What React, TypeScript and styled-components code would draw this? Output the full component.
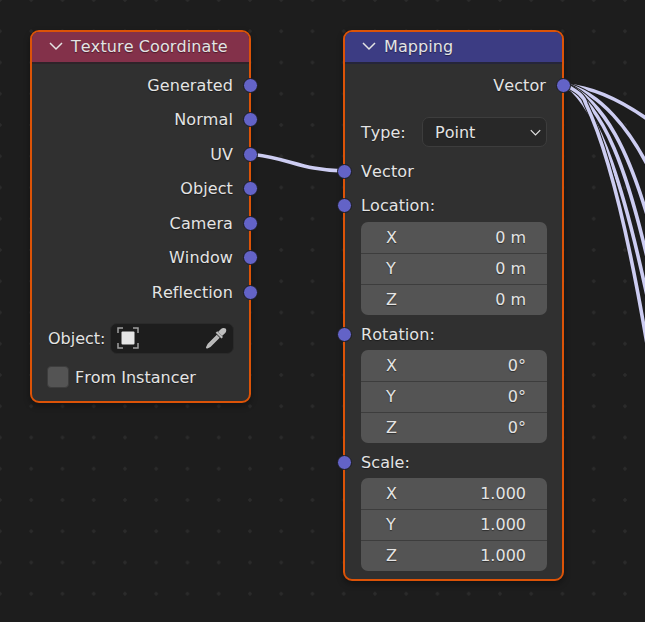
import React from 'react';
import styled, { createGlobalStyle } from 'styled-components';

const GlobalStyle = createGlobalStyle`
  body {
    margin: 0;
    background: #1d1d1d;
  }
`;

const Canvas = styled.div`
  position: relative;
  width: 645px;
  height: 622px;
  overflow: hidden;
  background-color: #1d1d1d;
  background-image: radial-gradient(circle, #2b2b2b 1.5px, transparent 1.7px);
  background-size: 31.25px 31.25px;
  background-position: 15.6px 15.6px;
  font-family: 'DejaVu Sans', sans-serif;
  font-size: 16px;
  font-kerning: none;
  color: #e4e4e4;
  text-shadow: 0 1px 1px rgba(0, 0, 0, 0.45);
`;

const Wires = styled.svg`
  position: absolute;
  left: 0;
  top: 0;
`;

const Node = styled.div<{ $x: number; $h: number }>`
  position: absolute;
  left: ${(p) => p.$x}px;
  top: 30px;
  box-sizing: border-box;
  width: 221px;
  height: ${(p) => p.$h}px;
  background: #303030;
  border: 2px solid #dc5307;
  border-radius: 9px;
  box-shadow: 0 3px 6px rgba(0, 0, 0, 0.35);
`;

const Header = styled.div<{ $bg: string; $edge: string }>`
  display: flex;
  align-items: center;
  gap: 8px;
  box-sizing: border-box;
  height: 32px;
  padding: 0 0 2px 17px;
  margin-bottom: 4px;
  letter-spacing: 0.1px;
  background: ${(p) => p.$bg};
  border-bottom: 2px solid ${(p) => p.$edge};
  border-radius: 7px 7px 0 0;
`;

const Row = styled.div<{ $right?: boolean; $h?: number }>`
  position: relative;
  display: flex;
  align-items: center;
  justify-content: ${(p) => (p.$right ? 'flex-end' : 'flex-start')};
  height: ${(p) => p.$h ?? 34.5}px;
  padding: 0 16px;
  letter-spacing: 0.1px;
`;

const Socket = styled.span<{ $side: 'left' | 'right' }>`
  position: absolute;
  ${(p) => p.$side}: -8.5px;
  top: 50%;
  box-sizing: border-box;
  width: 15px;
  height: 15px;
  margin-top: -7.5px;
  background: #6363c7;
  border: 1.5px solid #1b1b1f;
  border-radius: 50%;
`;

const PropRow = styled.div<{ $top: number; $bottom?: number; $left?: number }>`
  display: flex;
  align-items: center;
  height: 31px;
  margin: ${(p) => p.$top}px 15px ${(p) => p.$bottom ?? 0}px ${(p) => p.$left ?? 15}px;
`;

const PropLabel = styled.span<{ $w: number; $inset?: number }>`
  flex: none;
  box-sizing: border-box;
  width: ${(p) => p.$w}px;
  padding-left: ${(p) => p.$inset ?? 0}px;
`;

const ObjectField = styled.div`
  flex: 1;
  display: flex;
  align-items: center;
  justify-content: space-between;
  box-sizing: border-box;
  height: 31px;
  padding: 0 6px;
  background: #1d1d1d;
  border: 1px solid #2a2a2a;
  border-radius: 7px;
`;

const Check = styled.span`
  flex: none;
  width: 22px;
  height: 22px;
  margin-right: 6px;
  background: #545454;
  border: 1px solid #3d3d3d;
  box-sizing: border-box;
  border-radius: 4px;
`;

const Select = styled.div`
  flex: 1;
  display: flex;
  align-items: center;
  justify-content: space-between;
  box-sizing: border-box;
  height: 30px;
  padding: 0 5px 0 12px;
  background: #282828;
  border: 1px solid #3d3d3d;
  border-radius: 7px;
`;

const Fields = styled.div<{ $bottom?: number }>`
  display: flex;
  flex-direction: column;
  margin: 0 15px ${(p) => p.$bottom ?? 0}px 16px;
  background: #545454;
  border-radius: 7px;
  overflow: hidden;
`;

const Field = styled.div`
  display: flex;
  align-items: center;
  justify-content: space-between;
  box-sizing: border-box;
  height: 31px;
  padding: 0 21px 1px 25px;
  & + & {
    box-shadow: inset 0 1px 0 #3d3d3d;
  }
`;

const Chevron = ({ size, color }: { size: number; color: string }) => (
  <svg width={size} height={size} viewBox="0 0 14 14" fill="none">
    <path d="M1 4 L7 10 L13 4" stroke={color} strokeWidth="1.5" />
  </svg>
);

const FocusIcon = () => (
  <svg width="22" height="22" viewBox="0 0 22 22" fill="none">
    <path
      d="M1 6 V1 H6 M16 1 H21 V6 M21 16 V21 H16 M6 21 H1 V16"
      stroke="#a0a0a0"
      strokeWidth="1.5"
    />
    <rect x="4.5" y="4.5" width="13" height="13" rx="1" fill="#e6e6e6" />
  </svg>
);

const Dropper = () => (
  <svg width="22" height="22" viewBox="0 0 22 22" fill="none">
    <path
      d="M13 5 L16 2 C17.3 0.7 19.5 0.7 20.6 1.6 C21.7 2.8 21.4 4.8 20.2 6 L17 9 Z"
      fill="#bdbdbd"
    />
    <path d="M11.5 5 L17.2 10.8" stroke="#bdbdbd" strokeWidth="2.2" />
    <path
      d="M12.5 8.5 L3.5 17.5 L2 20.5 L5 19 L14 10"
      stroke="#bdbdbd"
      strokeWidth="2"
      strokeLinejoin="round"
    />
  </svg>
);

const texOutputs = ['Generated', 'Normal', 'UV', 'Object', 'Camera', 'Window', 'Reflection'];

const groups = [
  { label: 'Location:', h: 34, values: ['0 m', '0 m', '0 m'] },
  { label: 'Rotation:', h: 32, values: ['0°', '0°', '0°'] },
  { label: 'Scale:', h: 32, values: ['1.000', '1.000', '1.000'] },
];

const axes = ['X', 'Y', 'Z'];

const fan = [
  'M566 85 C 590 87, 618 98, 650 121',
  'M566 85 C 600 92, 630 130, 650 170',
  'M566 85 C 605 100, 630 155, 650 225',
  'M566 85 C 604 105, 628 172, 650 270',
  'M566 85 C 600 110, 625 190, 650 310',
  'M566 85 C 578 92, 584 96, 586 104 C 608 150, 630 240, 650 362',
];

function App() {
  return (
    <Canvas>
      <GlobalStyle />
      <Wires width="645" height="622" fill="none">
        <path d="M250 154 C 290 158, 300 170, 344 171" stroke="#cdcdf2" strokeWidth="3.6" />
        {fan.map((d) => (
          <g key={d}>
            <path d={d} stroke="#1d1d1d" strokeWidth="5.4" />
            <path d={d} stroke="#cdcdf2" strokeWidth="3.6" />
          </g>
        ))}
      </Wires>

      <Node $x={30} $h={373}>
        <Header $bg="#83314a" $edge="#2f2329">
          <Chevron size={14} color="#e4e4e4" />
          Texture Coordinate
        </Header>
        {texOutputs.map((name) => (
          <Row key={name} $right>
            {name}
            <Socket $side="right" />
          </Row>
        ))}
        <PropRow $top={13}>
          <PropLabel $w={63} $inset={1}>Object:</PropLabel>
          <ObjectField>
            <FocusIcon />
            <Dropper />
          </ObjectField>
        </PropRow>
        <PropRow $top={8}>
          <Check />
          From Instancer
        </PropRow>
      </Node>

      <Node $x={343} $h={551}>
        <Header $bg="#3c3c83" $edge="#25253a">
          <Chevron size={14} color="#e4e4e4" />
          Mapping
        </Header>
        <Row $right>
          Vector
          <Socket $side="right" />
        </Row>
        <PropRow $top={14} $bottom={7} $left={16}>
          <PropLabel $w={61}>Type:</PropLabel>
          <Select>
            Point
            <Chevron size={11} color="#e4e4e4" />
          </Select>
        </PropRow>
        <Row $h={33.5}>
          Vector
          <Socket $side="left" />
        </Row>
        {groups.map((g) => (
          <React.Fragment key={g.label}>
            <Row $h={g.h}>
              {g.label}
              <Socket $side="left" />
            </Row>
            <Fields $bottom={3}>
              {g.values.map((v, i) => (
                <Field key={axes[i]}>
                  <span>{axes[i]}</span>
                  <span>{v}</span>
                </Field>
              ))}
            </Fields>
          </React.Fragment>
        ))}
      </Node>
    </Canvas>
  );
}

export default App;
